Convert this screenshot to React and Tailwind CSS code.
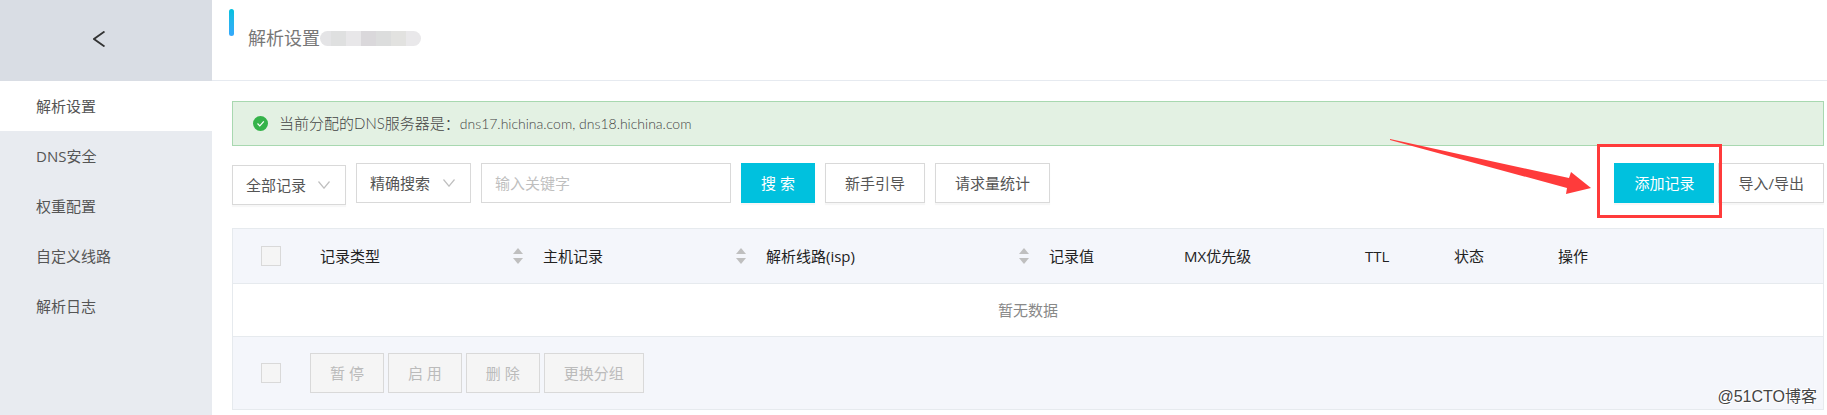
import { useState } from "react";
import clsx from "clsx";

const menuItems = ["解析设置", "DNS安全", "权重配置", "自定义线路", "解析日志"];

const columns = [
  { title: "记录类型", width: "w-[223px]", sortable: true },
  { title: "主机记录", width: "w-[223px]", sortable: true },
  { title: "解析线路(isp)", width: "w-[283px]", sortable: true },
  { title: "记录值", width: "w-[135px]" },
  { title: "MX优先级", width: "w-[181px]" },
  { title: "TTL", width: "w-[89px]" },
  { title: "状态", width: "w-[104px]" },
  { title: "操作", width: "" },
];

const bulkActions = ["暂 停", "启 用", "删 除", "更换分组"];

// censored domain name, one colour per mosaic block
const mosaic = [
  "w-[11px] bg-[#e4e4e6]",
  "w-[15px] bg-[#dfe0e0]",
  "w-[15px] bg-[#e8e7e9]",
  "w-[15px] bg-[#dad8db]",
  "w-[15px] bg-[#dcdddd]",
  "w-[15px] bg-[#e2e2e0]",
  "w-[15px] bg-[#e9e8ea]",
];

function Button({ children, primary, className, ...rest }) {
  return (
    <button
      type="button"
      className={clsx(
        "h-10 shrink-0 whitespace-nowrap border px-[19px]",
        primary
          ? "border-[#00c1de] bg-[#00c1de] text-white"
          : "border-[#d9d9d9] bg-white text-[#555]",
        "shadow-[0_2px_1px_rgba(0,0,0,0.03)]",
        className
      )}
      {...rest}
    >
      {children}
    </button>
  );
}

function Select({ label, options, className }) {
  return (
    <div className={clsx("relative shrink-0", className)}>
      <select
        aria-label={label}
        className="block h-10 w-full appearance-none border border-[#d9d9d9] bg-white pl-[13px] text-[#555] outline-none"
      >
        {options.map((option) => (
          <option key={option}>{option}</option>
        ))}
      </select>
      <svg
        className="pointer-events-none absolute top-4 right-4 h-2 w-3"
        viewBox="0 0 12 8"
        fill="none"
        stroke="#bfbfbf"
        strokeWidth="1.2"
      >
        <path d="M0.5 0.5L6 7.2L11.5 0.5" />
      </svg>
    </div>
  );
}

function Checkbox({ label }) {
  return (
    <input
      type="checkbox"
      aria-label={label}
      disabled
      className="block h-5 w-5 appearance-none border border-[#d9d9d9] bg-[#f5f5f5]"
    />
  );
}

function SortIcon() {
  return (
    <svg className="h-4 w-[10px]" viewBox="0 0 10 16" fill="#bfbfbf">
      <path d="M5 0L10 6H0z" />
      <path d="M5 16L10 10H0z" />
    </svg>
  );
}

function Sidebar() {
  const [active, setActive] = useState("解析设置");

  return (
    <aside className="flex w-[212px] shrink-0 flex-col bg-[#e8ebf0]">
      <button
        type="button"
        aria-label="返回"
        className="flex h-[81px] items-center justify-center bg-[#d9dde4] pr-[14px] pb-1"
      >
        <svg className="h-4 w-3" viewBox="0 0 12 16" fill="none" stroke="#333" strokeWidth="1.8">
          <path d="M11.5 0.5L1 8L11.5 15.5" />
        </svg>
      </button>
      <nav>
        {menuItems.map((item) => (
          <a
            key={item}
            href="#"
            onClick={() => setActive(item)}
            className={clsx(
              "flex h-[50px] items-center pl-9 text-[#555]",
              item === active && "bg-white"
            )}
          >
            {item}
          </a>
        ))}
      </nav>
    </aside>
  );
}

function PageHeader() {
  return (
    <header className="flex h-[81px] items-start border-b border-[#e6eaf0] pl-[17px]">
      <span className="mt-[9px] h-[27px] w-[5px] rounded-full bg-linear-to-b from-[#00c1de] to-[#35a8fc]" />
      <div className="mt-[26px] ml-[14px] flex items-center">
        <h1 className="text-lg leading-6 text-[#777]">解析设置</h1>
        <div className="flex h-[15px] overflow-hidden rounded-full">
          {mosaic.map((block) => (
            <span key={block} className={block} />
          ))}
        </div>
      </div>
    </header>
  );
}

function DnsNotice() {
  return (
    <div className="flex h-[45px] items-center gap-[11px] border border-[#a8d8b0] bg-[#e3f1e3] pl-5 font-['Lato','Noto_Sans_CJK_SC',sans-serif] font-light text-[#444]">
      <svg className="h-[15px] w-[15px]" viewBox="0 0 15 15" fill="none">
        <circle cx="7.5" cy="7.5" r="7.5" fill="#35b34a" />
        <path d="M4.5 7.5L6.8 9.8L10.8 5.4" stroke="#fff" strokeWidth="1.2" />
      </svg>
      <p>
        当前分配的DNS服务器是：
        <span className="text-sm">dns17.hichina.com, dns18.hichina.com</span>
      </p>
    </div>
  );
}

// red frame and arrow pointing at the wrapped button
function Highlight({ children }) {
  return (
    <div className="relative">
      {children}
      <div className="pointer-events-none absolute -top-[19px] -right-2 -bottom-[15px] -left-[17px] border-3 border-[#ff3b3b]" />
      <svg
        className="pointer-events-none absolute -top-6 right-[123px] h-14 w-[202px]"
        viewBox="0 0 202 56"
        fill="#ff3b3b"
      >
        <path d="M1 0L180 39L182 33L202 49L177 55L178 49L1 1z" />
      </svg>
    </div>
  );
}

function Toolbar() {
  return (
    <div className="mt-[17px] flex items-start gap-[10px]">
      <Select
        label="记录范围"
        options={["全部记录"]}
        className="mt-[2px] w-[114px] shadow-[0_2px_1px_rgba(0,0,0,0.03)]"
      />
      <Select label="搜索方式" options={["精确搜索"]} className="w-[115px]" />
      <input
        type="text"
        aria-label="关键字"
        placeholder="输入关键字"
        className="h-10 w-[250px] border border-[#d9d9d9] bg-white px-[13px] outline-none placeholder:text-[#bfbfbf]"
      />
      <Button primary>搜 索</Button>
      <Button>新手引导</Button>
      <Button>请求量统计</Button>
      <div className="ml-auto flex gap-1">
        <Highlight>
          <Button primary>添加记录</Button>
        </Highlight>
        <Button>导入/导出</Button>
      </div>
    </div>
  );
}

function RecordTable() {
  return (
    <table className="mt-[23px] w-full table-fixed border-separate border-spacing-0 border border-[#e6eaee] text-left">
      <thead className="bg-[#f4f6fb] text-[#222]">
        <tr className="h-[55px]">
          <th className="w-[77px] border-b border-[#e6eaee] pl-7">
            <Checkbox label="全选" />
          </th>
          {columns.map(({ title, width, sortable }) => (
            <th key={title} className={clsx("border-b border-[#e6eaee] px-[10px] font-normal", width)}>
              <div className="flex items-center justify-between">
                {title}
                {sortable && <SortIcon />}
              </div>
            </th>
          ))}
        </tr>
      </thead>
      <tbody>
        <tr className="h-[53px]">
          <td colSpan={9} className="border-b border-[#e6eaee] text-center text-[#888]">
            暂无数据
          </td>
        </tr>
      </tbody>
      <tfoot className="bg-[#f4f6fb]">
        <tr className="h-[72px]">
          <td className="pl-7">
            <Checkbox label="选择全部记录" />
          </td>
          <td colSpan={8}>
            <div className="flex gap-1">
              {bulkActions.map((action) => (
                <button
                  key={action}
                  type="button"
                  disabled
                  className="h-10 border border-[#d9d9d9] bg-[#f5f5f5] px-[19px] text-[#bbb]"
                >
                  {action}
                </button>
              ))}
            </div>
          </td>
        </tr>
      </tfoot>
    </table>
  );
}

export default function App() {
  return (
    <div className="relative flex min-h-screen bg-white font-['Open_Sans','Noto_Sans_CJK_SC',sans-serif] text-[15px] leading-5">
      <Sidebar />
      <main className="min-w-0 flex-1">
        <PageHeader />
        <div className="pt-5 pr-[3px] pl-5">
          <DnsNotice />
          <Toolbar />
          <RecordTable />
        </div>
      </main>
      <span className="absolute right-[10px] bottom-[6px] font-['Liberation_Sans','Noto_Sans_CJK_SC',sans-serif] text-base text-[#444] [text-shadow:-1px_-1px_0_#fff,1px_1px_0_#fff]">
        @51CTO博客
      </span>
    </div>
  );
}
